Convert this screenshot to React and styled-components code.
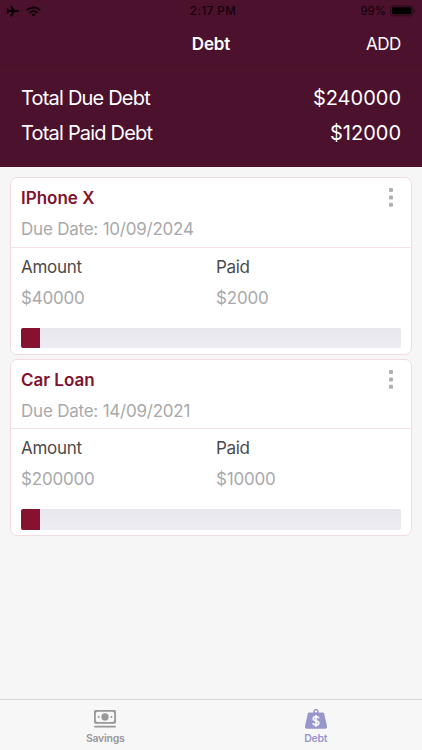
import React, { useState } from 'react';
import styled, { createGlobalStyle } from 'styled-components';

const initialDebts = [
  { id: 1, name: 'IPhone X', dueDate: '10/09/2024', amount: 40000, paid: 2000 },
  { id: 2, name: 'Car Loan', dueDate: '14/09/2021', amount: 200000, paid: 10000 },
];

const PlaneIcon = () => (
  <svg width="14" height="12" viewBox="0 0 14 12">
    <path
      d="M13.2 6c0-.7-.7-1-1.500-1H8.800L5.500.4H4.100L5.600 5H3.100L1.700 3.300H.5L1.200 6 .5 8.700h1.200L3.100 7h2.500l-1.500 4.600h1.400L8.800 7h2.900c.8 0 1.500-.3 1.500-1z"
      fill="#0d0207"
    />
  </svg>
);

const WifiIcon = () => (
  <svg width="15" height="11" viewBox="0 0 15 11">
    <g fill="none" stroke="#0d0207" strokeWidth="1.9">
      <path d="M.9 4.2C4.6.6 10.4.6 14.1 4.2" />
      <path d="M3.5 6.8c2.3-2.1 5.700-2.100 8 0" />
    </g>
    <path d="M5.3 8.500c1.300-1.100 3.100-1.100 4.400 0L7.500 10.600z" fill="#0d0207" />
  </svg>
);

const BatteryIcon = () => (
  <svg width="26" height="12" viewBox="0 0 26 12">
    <rect x=".5" y=".8" width="22.4" height="10" rx="2.2" fill="none" stroke="#2c0919" />
    <rect x="2" y="2.3" width="19.4" height="7" rx="1" fill="#000" />
    <path d="M24 4.2c1.5.5 1.5 2.7 0 3.2z" fill="#2c0919" />
  </svg>
);

const DotsIcon = () => (
  <svg width="4" height="19" viewBox="0 0 4 19">
    <rect width="4" height="4" rx="1" fill="#b1b1b3" />
    <rect y="7.4" width="4" height="4" rx="1" fill="#b1b1b3" />
    <rect y="14.8" width="4" height="4" rx="1" fill="#b1b1b3" />
  </svg>
);

const CashIcon = () => (
  <svg width="24" height="20" viewBox="0 0 24 20">
    <rect x="1.9" y="1.9" width="20.2" height="12" rx="1.2" fill="none" stroke="#98989a" strokeWidth="1.8" />
    <path d="M1.5 1.5h4L1.5 5zM22.5 1.5h-4l4 3.5zM1.5 14.3h4l-4-3.5zM22.5 14.3h-4l4-3.5z" fill="#98989a" />
    <circle cx="12" cy="7.9" r="3.6" fill="#98989a" />
    <circle cx="5.6" cy="7.9" r="1" fill="#98989a" />
    <circle cx="18.4" cy="7.9" r="1" fill="#98989a" />
    <path d="M2 17.7h20" stroke="#98989a" strokeWidth="1.8" strokeLinecap="round" />
  </svg>
);

const WeightIcon = () => (
  <svg width="24" height="20" viewBox="0 0 24 20">
    <circle cx="12" cy="2.6" r="2" fill="none" stroke="#9797cb" strokeWidth="1.4" />
    <path
      d="M5.2 3.500h13.600c.7 0 1.200.4 1.400 1l2.800 12.800c.3 1.300-.5 2.400-1.800 2.400H2.800c-1.300 0-2.100-1.100-1.800-2.400L3.800 4.500c.2-.6.7-1 1.400-1z"
      fill="#9797cb"
    />
    <path
      d="M14.8 9.400c-.3-1.200-1.400-1.700-2.800-1.700-1.600 0-2.700.8-2.700 2 0 2.900 5.500 1.400 5.500 4.200 0 1.300-1.200 2.100-2.800 2.100s-2.800-.7-2.900-2M12 6v11.800"
      fill="none"
      stroke="#f7f7f7"
      strokeWidth="1.8"
    />
  </svg>
);

const DebtCard = ({ debt }) => {
  const progress = (debt.paid / debt.amount) * 100;

  return <Card>
    <CardHeader>
      <div>
        <CardTitle>{debt.name}</CardTitle>
        <DueDate>Due Date: {debt.dueDate}</DueDate>
      </div>
      <MenuButton aria-label="Options"><DotsIcon /></MenuButton>
    </CardHeader>
    <CardBody>
      <Figures>
        <div>
          <FigureLabel>Amount</FigureLabel>
          <FigureValue>${debt.amount}</FigureValue>
        </div>
        <div>
          <FigureLabel>Paid</FigureLabel>
          <FigureValue>${debt.paid}</FigureValue>
        </div>
      </Figures>
      <ProgressTrack>
        <ProgressFill style={{ width: `${progress}%` }} />
      </ProgressTrack>
    </CardBody>
  </Card>
};

const App = () => {
  const [activeTab, setActiveTab] = useState('debt');
  const totalDue = initialDebts.reduce((sum, debt) => sum + debt.amount, 0);
  const totalPaid = initialDebts.reduce((sum, debt) => sum + debt.paid, 0);

  return <Screen>
    <GlobalStyle />
    <StatusBar>
      <StatusIcons><PlaneIcon /><WifiIcon /></StatusIcons>
      <Clock>2:17 PM</Clock>
      <Battery>99%<BatteryIcon /></Battery>
    </StatusBar>
    <NavBar>
      <NavTitle>Debt</NavTitle>
      <AddButton>ADD</AddButton>
    </NavBar>
    <Summary>
      <SummaryRow><SummaryLabel>Total Due Debt</SummaryLabel><SummaryValue>${totalDue}</SummaryValue></SummaryRow>
      <SummaryRow><SummaryLabel>Total Paid Debt</SummaryLabel><SummaryValue>${totalPaid}</SummaryValue></SummaryRow>
    </Summary>
    <DebtList>
      {initialDebts.map((debt) => <DebtCard key={debt.id} debt={debt} />)}
    </DebtList>
    <TabBar>
      <Tab $active={activeTab === 'savings'} onClick={() => setActiveTab('savings')}>
        <CashIcon />
        Savings
      </Tab>
      <Tab $active={activeTab === 'debt'} onClick={() => setActiveTab('debt')}>
        <WeightIcon />
        Debt
      </Tab>
    </TabBar>
  </Screen>
};

const GlobalStyle = createGlobalStyle`
* {
  box-sizing:border-box;
}
body {
  margin:0;
  font-family:Inter, "Liberation Sans", sans-serif;
}
button {
  font-family:inherit;
  padding:0;
  border:none;
  background:none;
}
svg {
  display:block;
}
`

const Screen = styled.div`
display:flex;
flex-flow:column nowrap;
width:422px;
height:750px;
overflow:hidden;
background:#f6f6f6;
`

const StatusBar = styled.div`
display:grid;
grid-template-columns:1fr auto 1fr;
align-items:center;
height:22px;
padding:0 6px;
background:#4b112d;
color:#12030a;
font-size:11.5px;
`

const StatusIcons = styled.div`
display:flex;
align-items:center;
gap:6px;
`

const Clock = styled.div`
font-weight:500;
letter-spacing:0.5px;
padding-left:4px;
`

const Battery = styled.div`
display:flex;
align-items:center;
justify-content:flex-end;
gap:4px;
`

const NavBar = styled.div`
display:grid;
grid-template-columns:1fr auto 1fr;
align-items:center;
height:44px;
padding:0 21px;
background:#4b112d;
border-bottom:1px solid #461029;
color:white;
`

const NavTitle = styled.div`
grid-column:2;
font-size:17px;
font-weight:600;
letter-spacing:-0.15px;
`

const AddButton = styled.button`
justify-self:end;
color:white;
font-size:17px;
letter-spacing:-0.4px;
`

const Summary = styled.div`
display:flex;
flex-flow:column nowrap;
height:101px;
padding:15px 21px 0;
background:#4b112d;
color:white;
`

const SummaryRow = styled.div`
display:flex;
justify-content:space-between;
height:35px;
font-size:20px;
line-height:35px;
`

const SummaryLabel = styled.span`
letter-spacing:-0.8px;
`

const SummaryValue = styled.span`
letter-spacing:0;
`

const DebtList = styled.div`
display:flex;
flex:1;
flex-flow:column nowrap;
gap:4.1px;
padding:10.2px 10px 0;
`

const Card = styled.div`
height:177.4px;
background:white;
border:1px solid #f1dce2;
border-radius:7px;
`

const CardHeader = styled.div`
display:flex;
justify-content:space-between;
align-items:flex-start;
height:69.8px;
padding:5px 18px 0 10px;
border-bottom:1px solid #f8e0e4;
`

const CardTitle = styled.div`
color:#81132f;
font-size:17px;
font-weight:600;
line-height:31px;
letter-spacing:0;
`

const DueDate = styled.div`
color:#a9a9ab;
font-size:17px;
line-height:31px;
letter-spacing:-0.22px;
`

const MenuButton = styled.button`
padding-top:5px;
`

const CardBody = styled.div`
padding:4px 10px 0 10px;
`

const Figures = styled.div`
display:grid;
grid-template-columns:195px 1fr;
height:76px;
font-size:17px;
line-height:31px;
letter-spacing:-0.3px;
`

const FigureLabel = styled.div`
color:#4b4b4d;
`

const FigureValue = styled.div`
color:#a9a9ab;
letter-spacing:-0.2px;
`

const ProgressTrack = styled.div`
height:20.5px;
overflow:hidden;
border-radius:2px;
background:linear-gradient(#e8e7ee, #edecf3);
`

const ProgressFill = styled.div`
height:100%;
background:#86122f;
`

const TabBar = styled.div`
display:grid;
grid-template-columns:1fr 1fr;
height:51px;
padding-right:1px;
border-top:1px solid #d7d7d8;
background:#f7f7f7;
`

const Tab = styled.button`
display:flex;
flex-flow:column nowrap;
align-items:center;
gap:3px;
padding-top:9px;
color:${(props) => (props.$active ? '#9797cb' : '#98989a')};
font-size:10.5px;
font-weight:600;
line-height:14px;
letter-spacing:-0.25px;
`

export default App;
